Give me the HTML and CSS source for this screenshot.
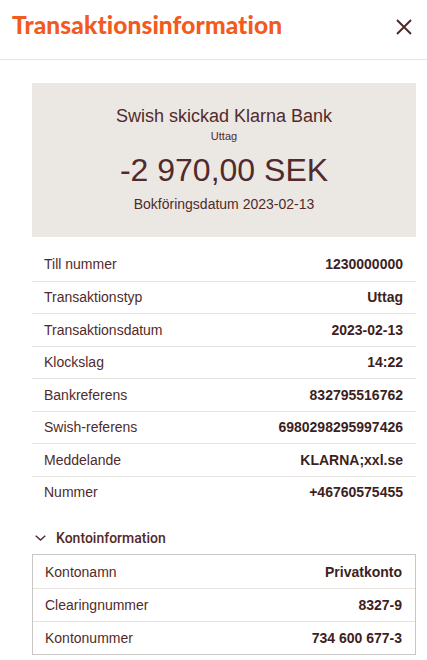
FILE: index.html
```html
<!DOCTYPE html>
<html lang="sv">
<head>
<meta charset="utf-8">
<link rel="stylesheet" href="styles.css">
</head>
<body>
<header class="header">
  <h1 class="title">Transaktionsinformation</h1>
  <button class="close" aria-label="Stäng">
    <svg width="16" height="16" viewBox="0 0 16 16"><path d="M1 1 L15 15 M15 1 L1 15" stroke="#512b2b" stroke-width="2" fill="none"/></svg>
  </button>
</header>
<main class="content">
  <section class="summary">
    <div class="sum-title">Swish skickad Klarna Bank</div>
    <div class="sum-type">Uttag</div>
    <div class="sum-amount">-2 970,00 SEK</div>
    <div class="sum-date">Bokföringsdatum 2023-02-13</div>
  </section>
  <dl class="details">
    <div class="row"><dt>Till nummer</dt><dd>1230000000</dd></div>
    <div class="row"><dt>Transaktionstyp</dt><dd>Uttag</dd></div>
    <div class="row"><dt>Transaktionsdatum</dt><dd>2023-02-13</dd></div>
    <div class="row"><dt>Klockslag</dt><dd>14:22</dd></div>
    <div class="row"><dt>Bankreferens</dt><dd>832795516762</dd></div>
    <div class="row"><dt>Swish-referens</dt><dd>6980298295997426</dd></div>
    <div class="row"><dt>Meddelande</dt><dd>KLARNA;xxl.se</dd></div>
    <div class="row"><dt>Nummer</dt><dd>+46760575455</dd></div>
  </dl>
  <div class="acc-head">
    <svg class="chev" width="11" height="6" viewBox="0 0 11 6"><path d="M0.7 0.7 L5.5 5 L10.3 0.7" stroke="#512b2b" stroke-width="1.4" fill="none"/></svg>
    <span>Kontoinformation</span>
  </div>
  <dl class="details boxed">
    <div class="row"><dt>Kontonamn</dt><dd>Privatkonto</dd></div>
    <div class="row"><dt>Clearingnummer</dt><dd>8327-9</dd></div>
    <div class="row"><dt>Kontonummer</dt><dd>734 600 677-3</dd></div>
  </dl>
</main>
</body>
</html>
```
FILE: styles.css
```css
* { box-sizing: border-box; }
html, body { margin: 0; padding: 0; background: #fff; }
body {
  font-family: "Liberation Sans", Arial, sans-serif;
  color: #512b2b;
  width: 427px;
  overflow: hidden;
}
.header {
  height: 60px;
  border-bottom: 1px solid #e6e6e6;
  display: flex;
  align-items: center;
  justify-content: space-between;
  padding: 0 15px 0 12px;
}
.title {
  margin: 0;
  font-family: Lato, sans-serif;
  font-weight: 900;
  font-size: 24.5px;
  color: #f35a1e;
  letter-spacing: 0.1px;
  line-height: 1;
  margin-top: -8px;
}
.close {
  border: 0;
  background: none;
  padding: 0;
  width: 16px;
  height: 16px;
  margin-top: -6px;
  display: flex;
}
.content {
  padding: 23px 11px 0 32px;
}
.summary {
  background: #ebe7e3;
  height: 154px;
  text-align: center;
  padding-top: 23px;
}
.sum-title { font-size: 18px; line-height: 21px; }
.sum-type { font-size: 11px; line-height: 13px; margin-top: 3px; }
.sum-amount { font-size: 32px; line-height: 37px; margin-top: 9px; }
.sum-date { font-size: 14px; line-height: 16px; margin-top: 7px; }
.details {
  margin: 11px 0 0 0;
}
.row {
  display: flex;
  justify-content: space-between;
  align-items: center;
  height: 32.5px;
  padding: 0 13px 0 12px;
  font-size: 14px;
}
.row + .row { border-top: 1px solid #e6e3df; }
.row dt { margin: 0; }
.row dd { margin: 0; font-weight: 700; color: #3d1f1f; }
.acc-head {
  display: flex;
  align-items: center;
  margin-top: 18px;
  height: 23px;
  font-family: Roboto, sans-serif;
  font-weight: 500;
  font-size: 14px;
}
.chev { margin-left: 3px; margin-right: 10px; }
.boxed {
  margin-top: 5px;
  border: 1px solid #c9c7c5;
}
.boxed .row { height: 33px; }
```
